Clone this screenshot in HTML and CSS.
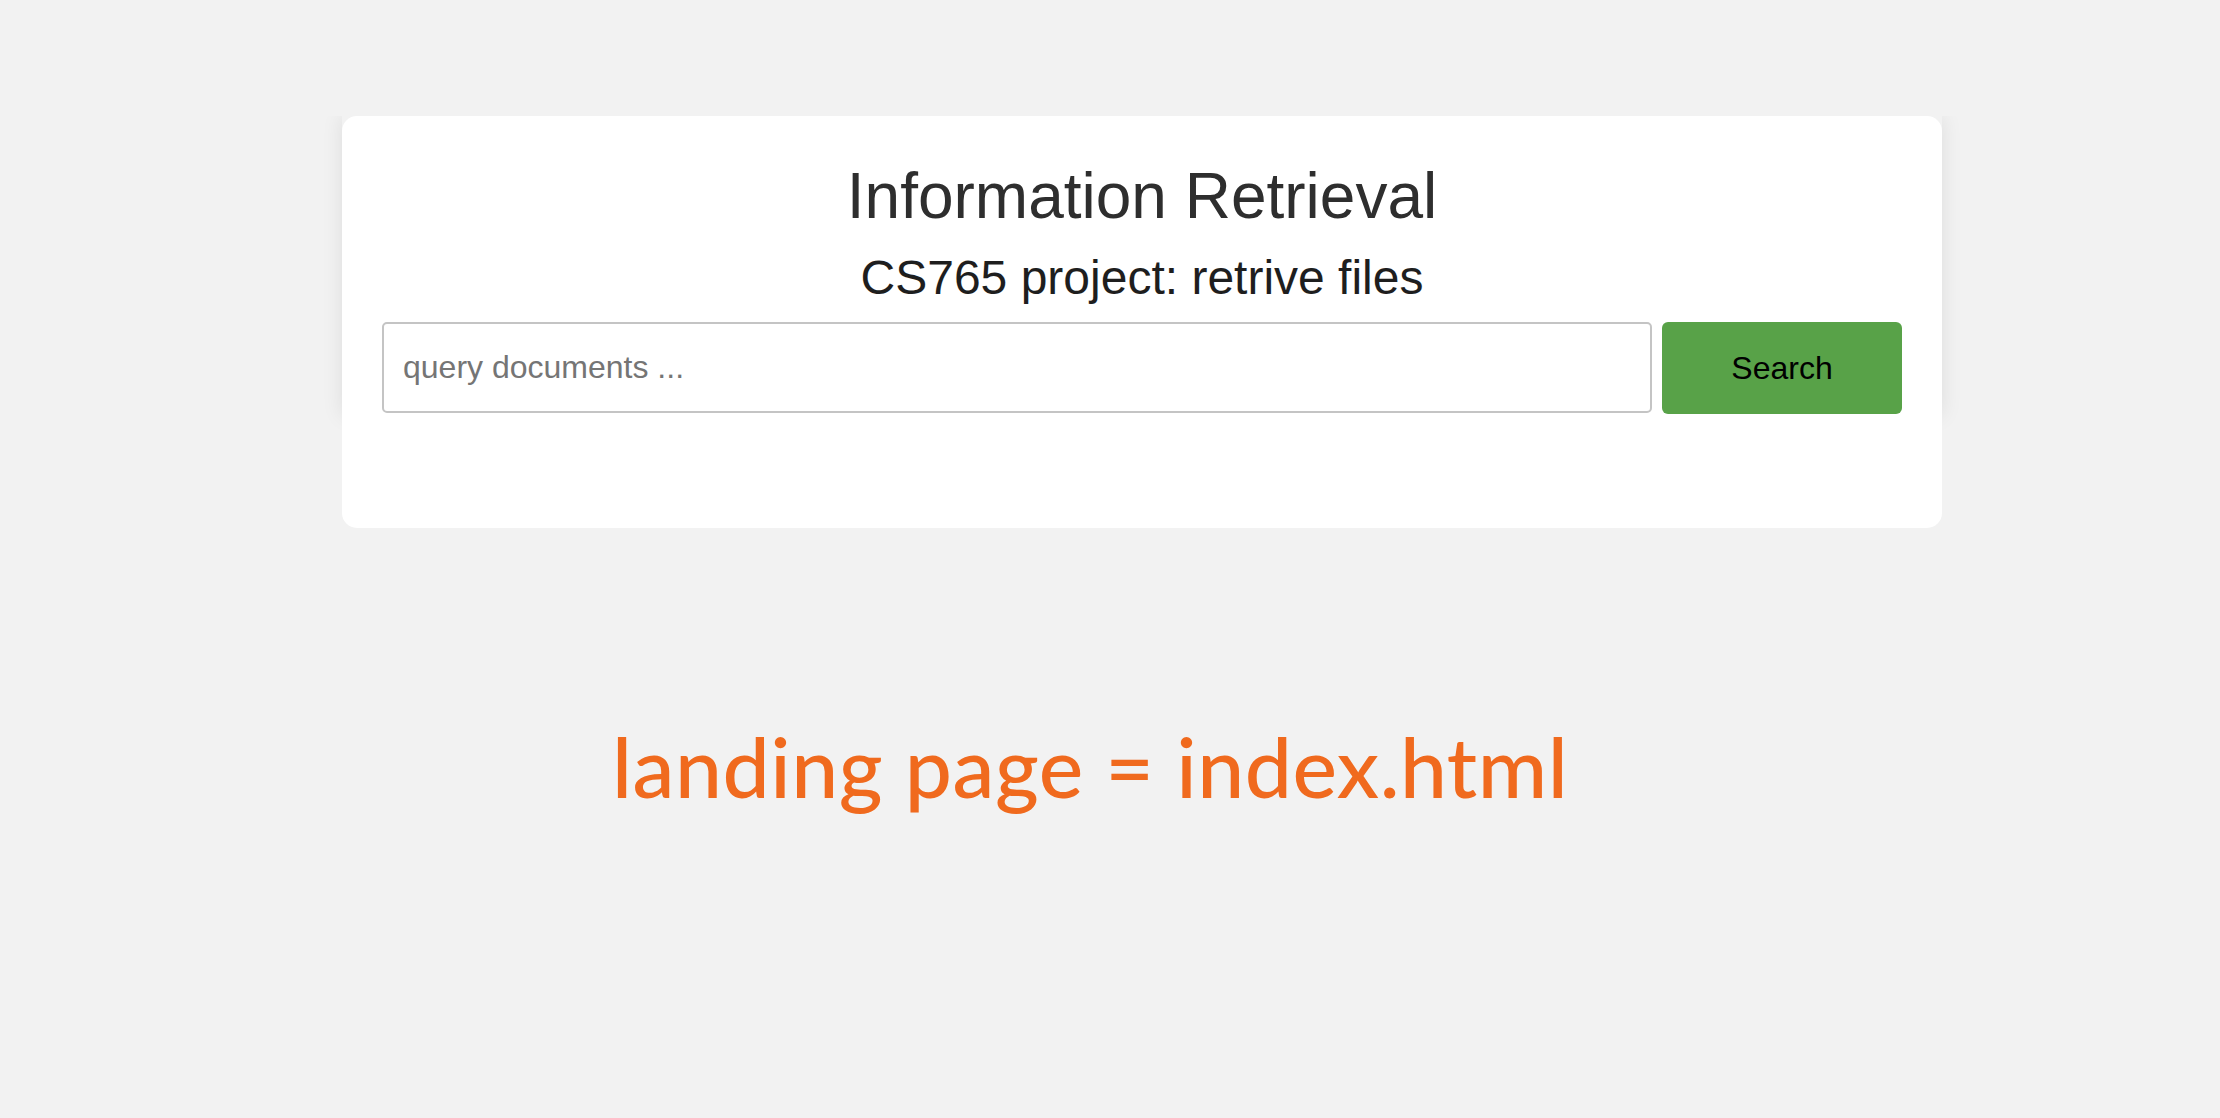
FILE: index.html
```html
<!DOCTYPE html>
<html lang="en">
<head>
<meta charset="utf-8">
<title>Information Retrieval</title>
<link rel="stylesheet" href="styles.css">
</head>
<body>
  <main class="card">
    <header class="card-head">
      <h1 class="title">Information Retrieval</h1>
      <h2 class="subtitle">CS765 project: retrive files</h2>
      <form class="search" onsubmit="return false">
        <input class="search-input" type="text" placeholder="query documents ...">
        <button class="search-btn" type="submit">Search</button>
      </form>
    </header>
    <section class="results"></section>
  </main>
  <p class="note">landing page = index.html</p>
</body>
</html>
```

FILE: styles.css
```css
html, body {
  margin: 0;
  padding: 0;
}

body {
  background: #f2f2f2;
  font-family: "Liberation Sans", Arial, sans-serif;
}

.card {
  position: relative;
  box-sizing: border-box;
  width: 1600px;
  height: 412px;
  margin: 116px 0 0 342px;
  padding: 43px 40px 0;
  background: #ffffff;
  border-radius: 15px;
}

.card::before {
  content: "";
  position: absolute;
  top: 0;
  left: 0;
  right: 0;
  height: 300px;
  box-shadow: 0 0 20px rgba(0, 0, 0, 0.09);
  clip-path: inset(0 -40px -40px -40px);
  z-index: -1;
}

.title {
  margin: 0;
  font-size: 64px;
  line-height: 74px;
  font-weight: 400;
  color: #2e2e2e;
  text-align: center;
}

.subtitle {
  margin: 17px 0 0;
  font-size: 48px;
  line-height: 56px;
  font-weight: 400;
  color: #1e1e1e;
  text-align: center;
}

.search {
  display: flex;
  gap: 10px;
  margin: 16px 0 0;
}

.search-input {
  flex: 1;
  box-sizing: border-box;
  height: 91px;
  padding: 0 19px;
  border: 2px solid #c4c4c4;
  border-radius: 5px;
  font-family: "Liberation Sans", Arial, sans-serif;
  font-size: 32px;
  color: #222;
  background: #fff;
  outline: none;
}

.search-input::placeholder {
  color: #757575;
}

.search-btn {
  box-sizing: border-box;
  width: 240px;
  height: 92px;
  border: 0;
  border-radius: 6px;
  background: #58a248;
  color: #000;
  font-family: "Liberation Sans", Arial, sans-serif;
  font-size: 32px;
  cursor: pointer;
}

.note {
  margin: 188px 0 0;
  padding-left: 612px;
  font-family: Lato, "Noto Sans", sans-serif;
  font-size: 84px;
  font-weight: 500;
  letter-spacing: 0.5px;
  line-height: 100px;
  color: #f06a1e;
  white-space: nowrap;
}
```
